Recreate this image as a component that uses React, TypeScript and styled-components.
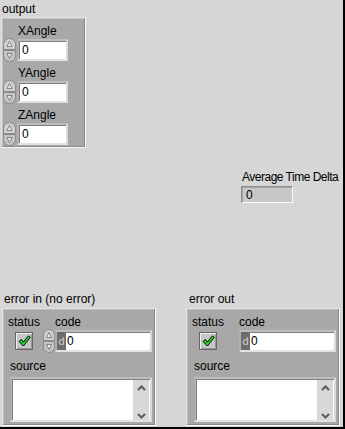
import React from "react";
import styled, { createGlobalStyle } from "styled-components";

const Global = createGlobalStyle`
  html, body { margin: 0; padding: 0; background: #d6d6d6; }
  body {
    font-family: "Liberation Sans", Arial, sans-serif;
    font-size: 12px;
    color: #000;
  }
`;

const Panel = styled.div`
  width: 345px;
  height: 429px;
  box-sizing: border-box;
  background: #d6d6d6;
  border-right: 2px solid #000;
  border-bottom: 2px solid #000;
  padding: 2px 0 0 1px;
  display: flex;
  flex-direction: column;
  overflow: hidden;
`;

const TopRow = styled.div`
  display: flex;
  align-items: flex-start;
  height: 290px;
  flex: none;
`;

const BottomRow = styled.div`
  display: flex;
  align-items: flex-start;
  gap: 30px;
  padding-left: 1px;
`;

const Block = styled.div`
  display: flex;
  flex-direction: column;
`;

const Label = styled.div<{ $ml?: number; $ls?: number }>`
  font-size: 12px;
  line-height: 14px;
  height: 14px;
  white-space: nowrap;
  margin-left: ${(p) => p.$ml ?? 0}px;
  letter-spacing: ${(p) => p.$ls ?? 0}px;
`;

const ItemLabel = styled(Label)`
  line-height: 13px;
  height: 13px;
`;

const ClusterBox = styled.div<{ $w: number; $h: number }>`
  width: ${(p) => p.$w}px;
  height: ${(p) => p.$h}px;
  box-sizing: border-box;
  background: #a8a8a8;
  border: 1px solid;
  border-color: #e4e4e4 #fafafa #fafafa #e4e4e4;
  box-shadow: inset -1px -1px 0 #8a8a8a, inset 1px 1px 0 #bdbdbd;
`;

const OutputCluster = styled(ClusterBox)`
  margin-top: 1px;
  padding: 7px 0 0 1px;
  display: flex;
  flex-direction: column;
  gap: 5px;
`;

const NumItem = styled.div`
  display: flex;
  flex-direction: column;
`;

const NumRow = styled.div`
  display: flex;
  align-items: center;
  height: 24px;
`;

const Field = styled.div<{ $w: number }>`
  width: ${(p) => p.$w}px;
  height: 22px;
  box-sizing: border-box;
  background: #fff;
  border: 2px solid;
  border-color: #bdbdbd #dadada #e2e2e2 #b0b0b0;
  box-shadow: inset 1px 1px 0 #7e7e7e;
  display: flex;
  align-items: center;
  font-size: 12px;
  line-height: 14px;
`;

const NumField = styled(Field)`
  margin-left: 1px;
  padding-left: 3px;
`;

const AvgBlock = styled(Block)`
  margin-left: 155px;
  margin-top: 168px;
`;

const Indicator = styled.div`
  width: 52px;
  height: 17px;
  box-sizing: border-box;
  margin-top: 2px;
  background: #c8c8c8;
  border: 1px solid;
  border-color: #8e8e8e #fbfbfb #fbfbfb #8e8e8e;
  box-shadow: inset 1px 1px 0 #a6a6a6;
  padding-left: 4px;
  display: flex;
  align-items: center;
  font-size: 12px;
  line-height: 14px;
`;

const ErrorCluster = styled(ClusterBox)`
  margin-top: 2px;
  padding: 6px 0 0 5px;
  display: flex;
  flex-direction: column;
`;

const ErrGrid = styled.div`
  display: grid;
  grid-template-columns: 35px 12px 97px;
  grid-template-rows: 14px 24px;
`;

const StatusButton = styled.div`
  grid-column: 1;
  grid-row: 2;
  width: 18px;
  height: 18px;
  box-sizing: border-box;
  margin: 3px 0 0 7px;
  background: #c6c6c6;
  border: 1px solid #666;
  box-shadow: inset 1px 1px 0 #eeeeee, inset -1px -1px 0 #999;
  display: flex;
  align-items: center;
  justify-content: center;
`;

const SpinCell = styled.div`
  grid-column: 2;
  grid-row: 2;
`;

const CodeField = styled(Field)`
  grid-column: 3;
  grid-row: 2;
  margin-top: 1px;
  overflow: hidden;
`;

const Radix = styled.span`
  width: 9px;
  align-self: stretch;
  background: #6c6c6c;
  color: #cfcfcf;
  display: flex;
  align-items: center;
  justify-content: center;
  font-size: 11px;
  margin-right: 1px;
`;

const SourceBox = styled.div`
  margin: 4px 0 0 2px;
  width: 142px;
  height: 45px;
  box-sizing: border-box;
  background: #fff;
  border: 2px solid;
  border-color: #bdbdbd #dadada #e2e2e2 #b0b0b0;
  box-shadow: inset 1px 1px 0 #7e7e7e;
  display: flex;
  justify-content: flex-end;
  padding: 1px 1px 0 0;
`;

const ScrollBar = styled.div`
  width: 16px;
  background: #d8d8d8;
  display: flex;
  flex-direction: column;
  justify-content: space-between;
  align-items: center;
  padding: 5px 0 1px;
  box-sizing: border-box;
`;

const Spinner: React.FC<{ w?: number }> = ({ w = 13 }) => {
  const c = w / 2;
  const r = c - 1;
  return (
    <svg width={w} height={24} viewBox={`0 0 ${w} 24`}>
      <path
        d={`M0.5,11.5 V${r + 1} A${r},${r} 0 0 1 ${w - 0.5},${r + 1} V11.5 Z`}
        fill="#cfcfcf"
        stroke="#8a8a8a"
      />
      <path
        d={`M0.5,12.5 V${23 - r} A${r},${r} 0 0 0 ${w - 0.5},${23 - r} V12.5 Z`}
        fill="#c4c4c4"
        stroke="#8a8a8a"
      />
      <path d={`M${c},3.5 L${c + 2.5},8.5 L${c - 2.5},8.5 Z`} fill="#ececec" stroke="#6e6e6e" strokeWidth="0.8" />
      <path d={`M${c - 2.5},15.5 L${c + 2.5},15.5 L${c},20.5 Z`} fill="#ececec" stroke="#6e6e6e" strokeWidth="0.8" />
    </svg>
  );
};

const Check = () => (
  <svg width="13" height="12" viewBox="0 0 13 12">
    <path
      d="M1,6.5 L3.5,4.5 L5.2,7.2 L10.5,0.8 L12.3,2.3 L5.4,11 Z"
      fill="#22dd22"
      stroke="#000"
      strokeWidth="1"
      strokeLinejoin="round"
    />
  </svg>
);

const Chevron: React.FC<{ down?: boolean }> = ({ down }) => (
  <svg width="9" height="6" viewBox="0 0 9 6">
    <polyline
      points={down ? "1,1 4.5,4.5 8,1" : "1,5 4.5,1.5 8,5"}
      fill="none"
      stroke="#5a5a5a"
      strokeWidth="2"
    />
  </svg>
);

const NumericControl: React.FC<{ label: string }> = ({ label }) => (
  <NumItem>
    <ItemLabel $ml={15}>{label}</ItemLabel>
    <NumRow>
      <Spinner />
      <NumField $w={51}>0</NumField>
    </NumRow>
  </NumItem>
);

const ErrorClusterView: React.FC<{ label: string; spinner: boolean; labelMl: number }> = ({
  label,
  spinner,
  labelMl,
}) => (
  <Block>
    <Label $ml={labelMl}>{label}</Label>
    <ErrorCluster $w={154} $h={118}>
      <ErrGrid>
        <Label style={{ gridColumn: 1, gridRow: 1 }}>status</Label>
        <Label style={{ gridColumn: 3, gridRow: 1 }}>code</Label>
        <StatusButton>
          <Check />
        </StatusButton>
        {spinner && (
          <SpinCell>
            <Spinner w={12} />
          </SpinCell>
        )}
        <CodeField $w={97}>
          <Radix>d</Radix>0
        </CodeField>
      </ErrGrid>
      <Label $ml={2} style={{ marginTop: 6 }}>
        source
      </Label>
      <SourceBox>
        <ScrollBar>
          <Chevron />
          <Chevron down />
        </ScrollBar>
      </SourceBox>
    </ErrorCluster>
  </Block>
);

export default function App() {
  return (
    <>
      <Global />
      <Panel>
        <TopRow>
          <Block>
            <Label $ml={1}>output</Label>
            <OutputCluster $w={85} $h={131}>
              <NumericControl label="XAngle" />
              <NumericControl label="YAngle" />
              <NumericControl label="ZAngle" />
            </OutputCluster>
          </Block>
          <AvgBlock>
            <Label $ml={1} $ls={-0.5}>
              Average Time Delta
            </Label>
            <Indicator>0</Indicator>
          </AvgBlock>
        </TopRow>
        <BottomRow>
          <ErrorClusterView label="error in (no error)" spinner labelMl={2} />
          <ErrorClusterView label="error out" spinner={false} labelMl={3} />
        </BottomRow>
      </Panel>
    </>
  );
}
